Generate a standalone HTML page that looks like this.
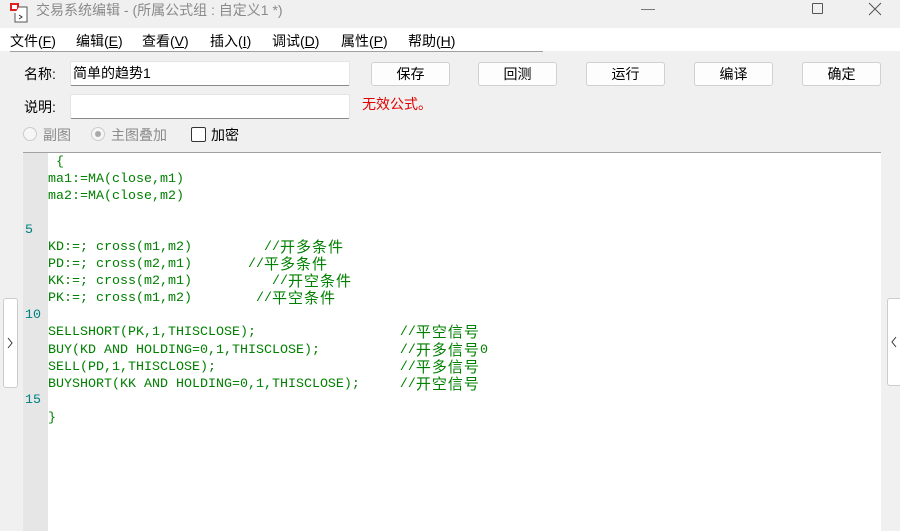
<!DOCTYPE html>
<html><head><meta charset="utf-8"><style>
*{margin:0;padding:0;box-sizing:border-box}
body{width:900px;height:531px;background:#f0f0f0;font-family:"Liberation Sans","Noto Sans CJK SC",sans-serif;font-size:14px;position:relative;overflow:hidden;color:#000}
.a{position:absolute;white-space:nowrap}
.btn{position:absolute;top:62px;width:79px;height:24px;background:#fdfdfd;border:1px solid #d0d0d0;border-radius:3px;text-align:center;line-height:22px;font-size:14px}
.inp{position:absolute;left:70px;width:280px;height:25px;background:#fff;border:1px solid #e4e4e4;border-bottom:1px solid #8a8a8a;border-radius:2px}
.code{position:absolute;left:48px;top:154px;font-family:"Liberation Mono",monospace;font-size:13.33px;color:#008000}
.code div{height:17.05px;line-height:17px;white-space:pre;overflow:visible}
.c{font-family:"Noto Sans CJK SC",sans-serif;font-size:15px;line-height:15px;display:inline-block;height:17px;vertical-align:top;letter-spacing:1px}
.ln{position:absolute;left:25px;font-family:"Liberation Mono",monospace;font-size:13.33px;line-height:17px;color:#008080}
</style></head><body>
<svg class="a" style="left:9px;top:2px" width="22" height="22"><rect x="1" y="1" width="9" height="8" fill="#e02020"/><rect x="3" y="3" width="5" height="4" fill="#fff"/><path d="M10 5h8v15H6v-9" fill="#fff" stroke="#555"/><path d="M10 13l3 2-3 2" fill="none" stroke="#333"/></svg>
<div class="a" style="left:36px;top:0px;font-size:14px;color:#8a8a8a">交易系统编辑 - (所属公式组 : 自定义1 *)</div>
<div class="a" style="left:641px;top:9px;width:14px;border-top:1px solid #777"></div>
<div class="a" style="left:812px;top:3px;width:11px;height:11px;border:1px solid #555;border-radius:1px"></div>
<svg class="a" style="left:868px;top:2px" width="14" height="14"><path d="M1 1L13 13M13 1L1 13" stroke="#555" stroke-width="1"/></svg>
<div class="a" style="left:0;top:28px;width:900px;height:23px;background:#fff"></div>
<div class="a" style="left:10px;top:51px;width:533px;border-top:1px solid #a0a0a0"></div>
<div class="a" style="left:10px;top:31px">文件(<u>F</u>)</div>
<div class="a" style="left:76px;top:31px">编辑(<u>E</u>)</div>
<div class="a" style="left:142px;top:31px">查看(<u>V</u>)</div>
<div class="a" style="left:210px;top:31px">插入(<u>I</u>)</div>
<div class="a" style="left:272px;top:31px">调试(<u>D</u>)</div>
<div class="a" style="left:341px;top:31px">属性(<u>P</u>)</div>
<div class="a" style="left:408px;top:31px">帮助(<u>H</u>)</div>
<div class="a" style="left:24px;top:64px">名称:</div>
<div class="inp" style="top:61px"></div>
<div class="a" style="left:73px;top:63px">简单的趋势1</div>
<div class="a" style="left:24px;top:97px">说明:</div>
<div class="inp" style="top:94px"></div>
<div class="a" style="left:362px;top:94px;color:#e00000">无效公式。</div>
<div class="btn" style="left:371px">保存</div>
<div class="btn" style="left:478px">回测</div>
<div class="btn" style="left:586px">运行</div>
<div class="btn" style="left:694px">编译</div>
<div class="btn" style="left:802px">确定</div>
<div class="a" style="left:23px;top:127px;width:14px;height:14px;border:1px solid #ccc;border-radius:50%;background:#f6f6f6"></div>
<div class="a" style="left:43px;top:125px;color:#8a8a8a">副图</div>
<div class="a" style="left:91px;top:127px;width:14px;height:14px;border:1px solid #ccc;border-radius:50%;background:#f6f6f6"></div>
<div class="a" style="left:95px;top:131px;width:6px;height:6px;border-radius:50%;background:#aaa"></div>
<div class="a" style="left:111px;top:125px;color:#8a8a8a">主图叠加</div>
<div class="a" style="left:191px;top:127px;width:15px;height:15px;border:1px solid #333;border-radius:2px;background:#fff"></div>
<div class="a" style="left:211px;top:125px">加密</div>
<div class="a" style="left:23px;top:152px;width:858px;height:379px;background:#fff;border-top:1px solid #a0a0a0"></div>
<div class="a" style="left:23px;top:153px;width:25px;height:378px;background:#e6e6e6"></div>
<div class="ln" style="top:222px">5</div>
<div class="ln" style="top:307px">10</div>
<div class="ln" style="top:392px">15</div>
<div class="code">
<div> {</div>
<div>ma1:=MA(close,m1)</div>
<div>ma2:=MA(close,m2)</div>
<div></div>
<div></div>
<div>KD:=; cross(m1,m2)         //<span class="c">开多条件</span></div>
<div>PD:=; cross(m2,m1)       //<span class="c">平多条件</span></div>
<div>KK:=; cross(m2,m1)          //<span class="c">开空条件</span></div>
<div>PK:=; cross(m1,m2)        //<span class="c">平空条件</span></div>
<div></div>
<div>SELLSHORT(PK,1,THISCLOSE);                  //<span class="c">平空信号</span></div>
<div>BUY(KD AND HOLDING=0,1,THISCLOSE);          //<span class="c">开多信号</span>0</div>
<div>SELL(PD,1,THISCLOSE);                       //<span class="c">平多信号</span></div>
<div>BUYSHORT(KK AND HOLDING=0,1,THISCLOSE);     //<span class="c">开空信号</span></div>
<div></div>
<div>}</div>
</div>
<div class="a" style="left:3px;top:298px;width:15px;height:90px;background:#fff;border:1px solid #ccc;border-radius:3px"></div>
<svg class="a" style="left:6px;top:337px" width="8" height="12"><path d="M2 1l4 5-4 5" fill="none" stroke="#333"/></svg>
<div class="a" style="left:887px;top:298px;width:16px;height:88px;background:#fff;border:1px solid #ccc;border-radius:3px"></div>
<svg class="a" style="left:890px;top:336px" width="8" height="12"><path d="M6 1L2 6l4 5" fill="none" stroke="#333"/></svg>
</body></html>
